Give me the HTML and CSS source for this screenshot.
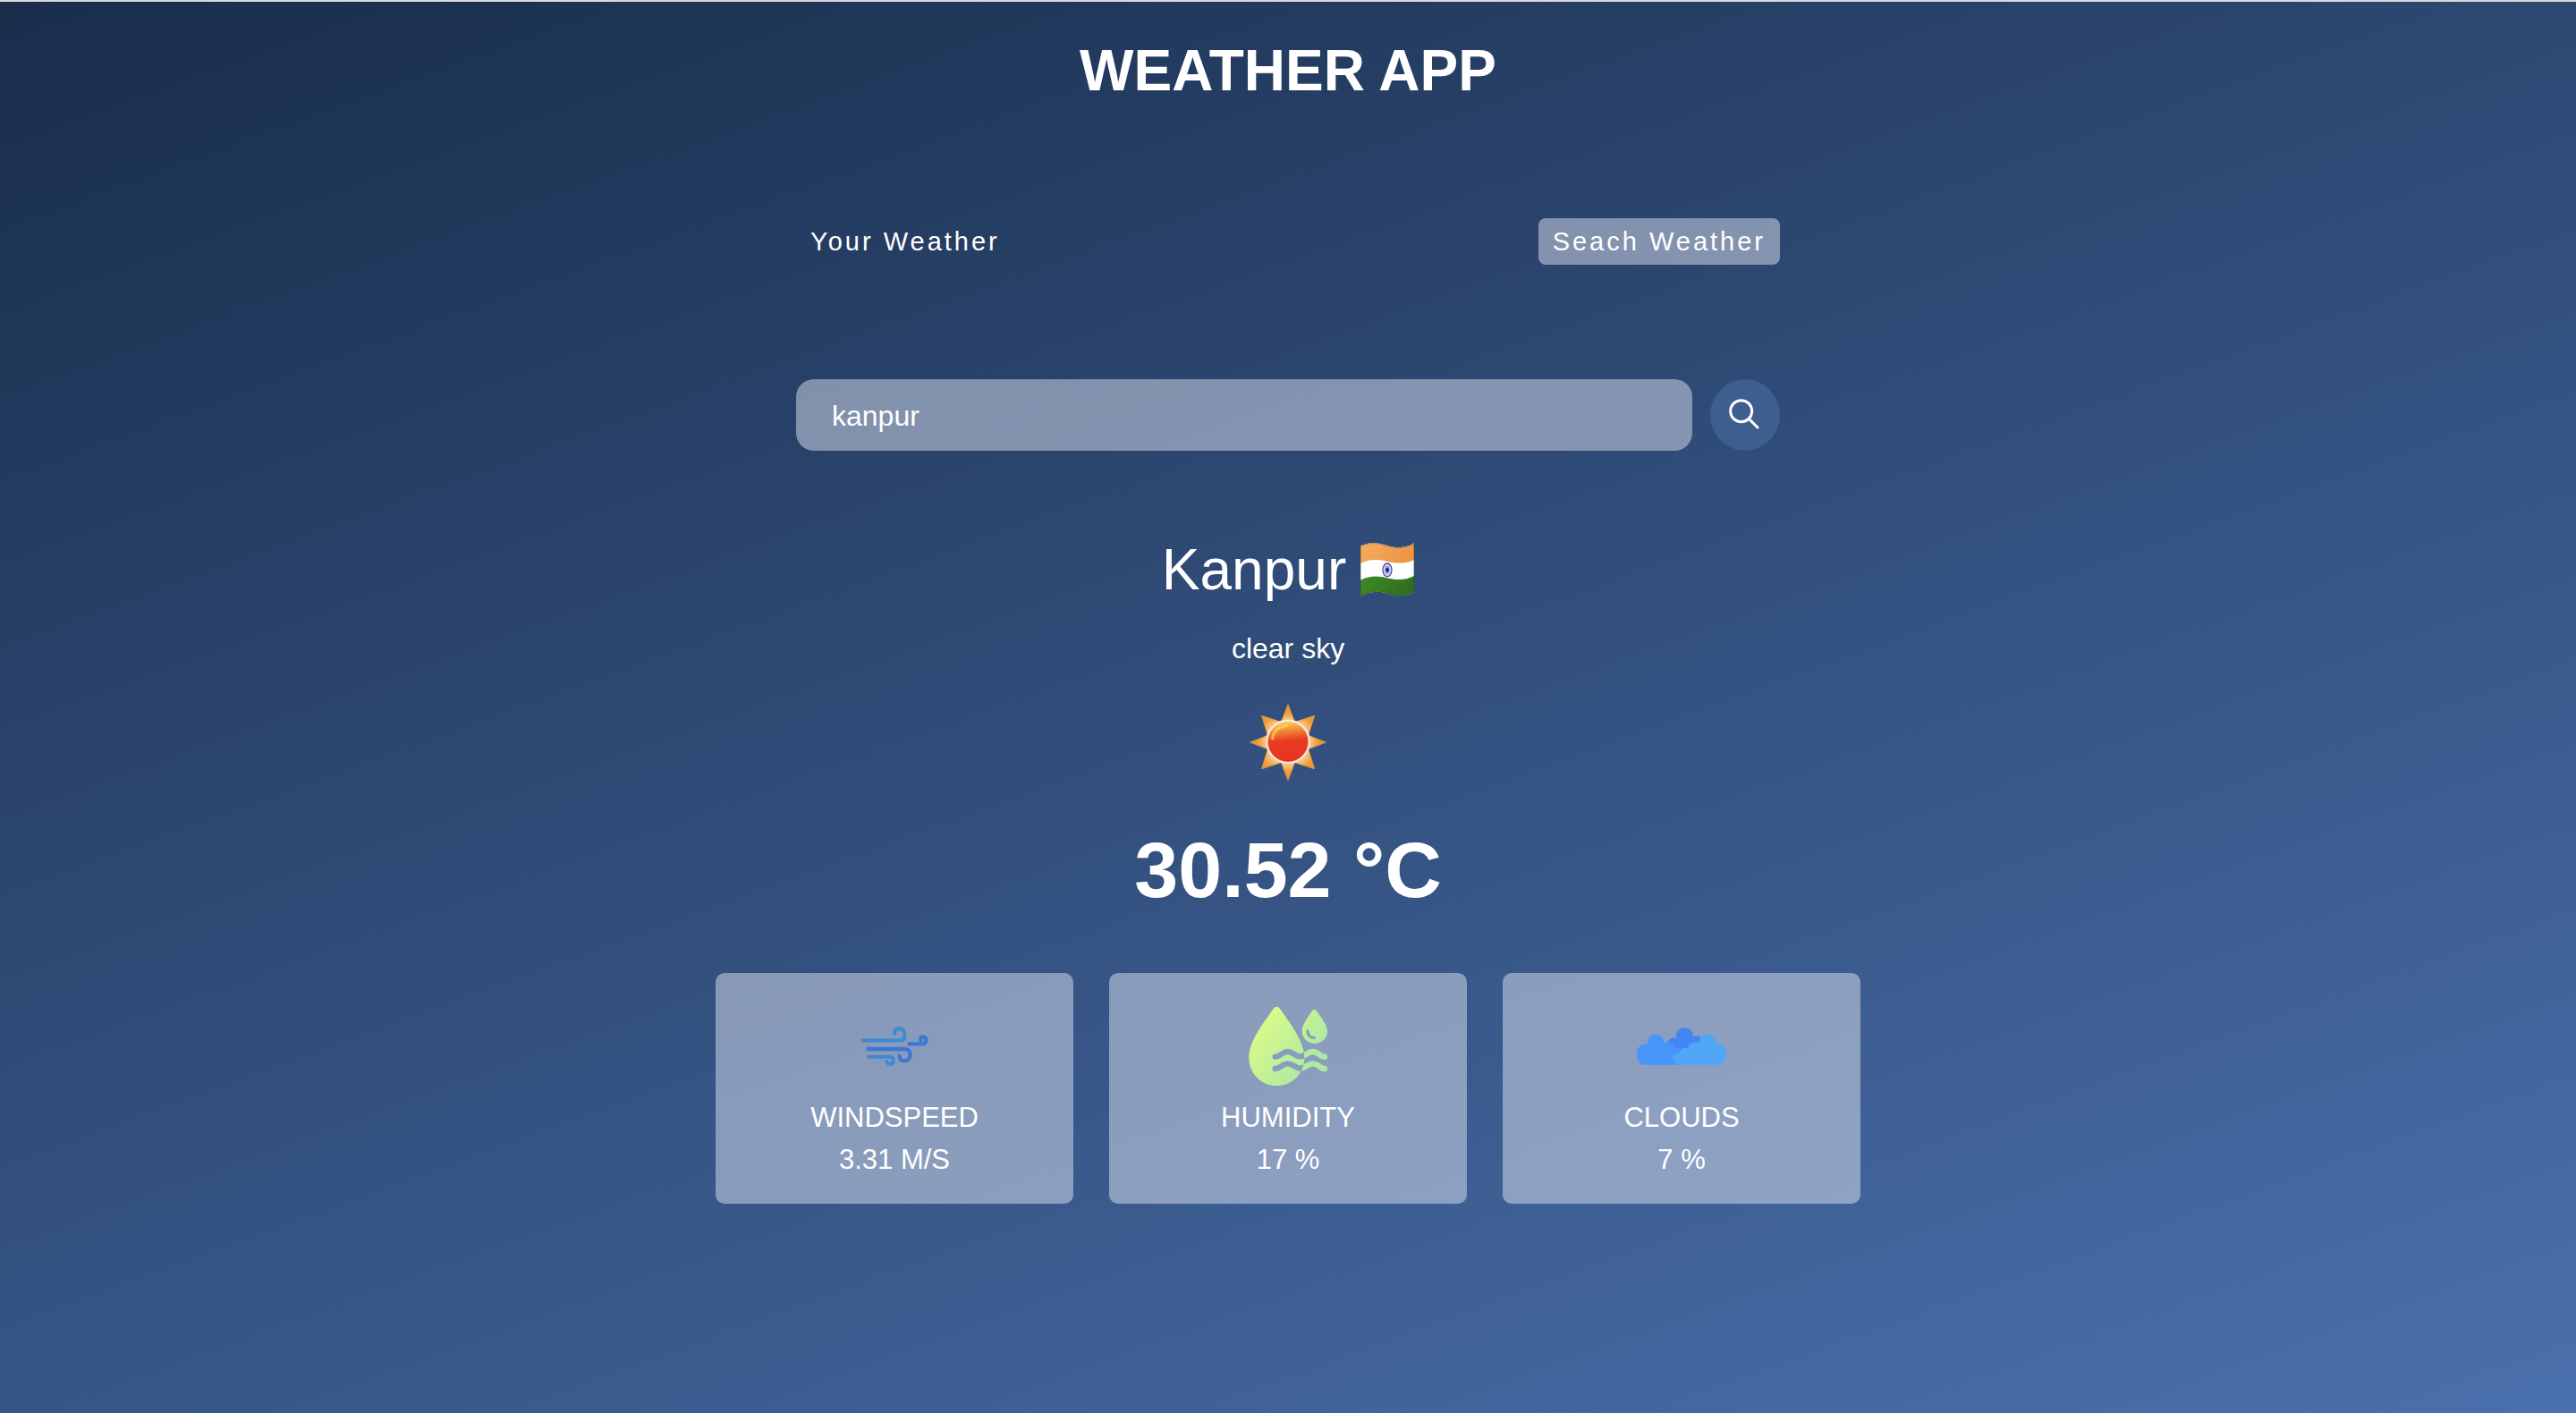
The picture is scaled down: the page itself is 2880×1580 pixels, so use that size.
FILE: index.html
```html
<!DOCTYPE html>
<html lang="en">
<head>
  <meta charset="UTF-8">
  <meta name="viewport" content="width=device-width, initial-scale=1">
  <title>Weather App</title>
  <link rel="stylesheet" href="styles.css">
</head>
<body>
  <main class="wrapper">
    <h1 class="title">WEATHER APP</h1>

    <nav class="tabs">
      <button type="button" class="tab">Your Weather</button>
      <button type="button" class="tab tab-current">Seach Weather</button>
    </nav>

    <form class="search">
      <input class="search-input" type="text" value="kanpur" aria-label="Search for city">
      <button class="search-button" type="submit" aria-label="Search">
        <svg class="search-icon" viewBox="0 0 102 102" fill="none" stroke="#fff" stroke-width="9" stroke-linecap="round">
          <circle cx="41" cy="41" r="36"/>
          <path d="M67 67L96 96"/>
        </svg>
      </button>
    </form>

    <section class="weather">
      <div class="place">
        <h2 class="city">Kanpur</h2>
        <svg class="flag" viewBox="63 50 180 180" role="img" aria-label="India">
          <defs>
            <linearGradient id="saffron" x1="0" y1="0" x2="1" y2="0.4">
              <stop offset="0" stop-color="#f4ae62"/>
              <stop offset="1" stop-color="#ee9647"/>
            </linearGradient>
            <linearGradient id="green" x1="0" y1="0" x2="1" y2="0.4">
              <stop offset="0" stop-color="#418b2a"/>
              <stop offset="1" stop-color="#306e1d"/>
            </linearGradient>
            <clipPath id="flag-shape">
              <path d="M63 61C92 46 124 49 153 59S214 68 243 51V215C214 233 182 230 153 220S92 214 63 229Z"/>
            </clipPath>
          </defs>
          <g clip-path="url(#flag-shape)">
            <path fill="#fff" d="M63 50H243V230H63Z"/>
            <path fill="url(#saffron)" d="M63 45H243V107C214 122 182 119 153 112S92 104 63 119Z"/>
            <path fill="url(#green)" d="M63 175C92 159 124 160 153 168S214 176 243 161V235H63Z"/>
            <path fill="none" stroke="#23401f" stroke-opacity="0.35" stroke-width="5" d="M63 61C92 46 124 49 153 59S214 68 243 51V215C214 233 182 230 153 220S92 214 63 229Z"/>
          </g>
          <ellipse cx="153" cy="141" rx="15" ry="22" fill="#d9d8ee" stroke="#4b49a8" stroke-width="4"/>
          <ellipse cx="153" cy="141" rx="8" ry="13" fill="#8f8dcb"/>
          <ellipse cx="153" cy="141" rx="5" ry="7" fill="#1d1b86"/>
        </svg>
      </div>
      <p class="description">clear sky</p>
      <svg class="sun" viewBox="18 18 324 324" role="img" aria-label="Clear sky">
        <defs>
          <linearGradient id="sun-face" x1="0.42" y1="0" x2="0.52" y2="1">
            <stop offset="0" stop-color="#ffdc62"/>
            <stop offset="0.22" stop-color="#f0913a"/>
            <stop offset="0.48" stop-color="#e93a22"/>
            <stop offset="1" stop-color="#e93422"/>
          </linearGradient>
          <radialGradient id="sun-rays" gradientUnits="userSpaceOnUse" cx="180" cy="180" r="128">
            <stop offset="0.6" stop-color="#f9c27c"/>
            <stop offset="0.78" stop-color="#f19b3c"/>
            <stop offset="1" stop-color="#e0913c"/>
          </radialGradient>
        </defs>
        <path fill="url(#sun-rays)" stroke="#e0953f" stroke-width="3" stroke-linejoin="round" d="M180 53L203 112L269 91L248 157L307 180L248 203L269 269L203 248L180 307L157 248L92 269L112 203L53 180L112 157L92 91L157 112Z"/>
        <circle cx="180" cy="178" r="71" fill="url(#sun-face)" stroke="#f5e9e2" stroke-width="7"/>
        <path d="M128 168Q132 132 176 124" fill="none" stroke="#ffdc50" stroke-width="9" stroke-linecap="round" stroke-opacity="0.7"/>
      </svg>
      <p class="temperature">30.52 °C</p>
    </section>

    <section class="cards">
      <article class="card">
        <svg class="card-icon" viewBox="30 -30 300 300" fill="none" stroke-width="13" stroke-linecap="round" aria-hidden="true">
          <g stroke="#3f8ad2">
            <path d="M73 100H199C209 100 214 93 214 83C214 68 207 60 197 60S180 67 180 77"/>
            <path d="M94 155H166C173 155 176 161 176 168C176 176 171 180 165 180S155 176 155 171" stroke-width="12"/>
          </g>
          <g stroke="#3b77d3">
            <path d="M91 129H216C227 129 233 138 233 147C233 160 225 169 214 169S197 162 197 153"/>
            <path d="M230 112H275C282 112 286 106 286 100C286 92 281 88 275 88S267 93 268 99"/>
          </g>
        </svg>
        <p class="card-text">WINDSPEED</p>
        <p class="card-text">3.31 M/S</p>
      </article>

      <article class="card">
        <svg class="card-icon" viewBox="30 30 300 300" aria-hidden="true">
          <defs>
            <linearGradient id="humid" gradientUnits="userSpaceOnUse" x1="90" y1="130" x2="250" y2="250">
              <stop offset="0" stop-color="#d6f98a"/>
              <stop offset="1" stop-color="#ade9a3"/>
            </linearGradient>
            <path id="big-drop" d="M142 47C148 47 152 52 156 58C188 105 235 163 235 218C235 270 194 312 142 312S49 270 49 218C49 163 96 105 128 58C132 52 136 47 142 47Z"/>
            <g id="waves" fill="none" stroke-width="19" stroke-linecap="round">
              <path d="M137 215C157 215 158 198 179 198S201 214 221 214S244 198 264 198S283 215 303 215"/>
              <path d="M137 255C157 255 158 238 179 238S201 254 221 254S244 238 264 238S283 255 303 255"/>
            </g>
            <mask id="drop-mask" maskUnits="userSpaceOnUse" x="30" y="30" width="300" height="300">
              <path fill="#fff" d="M30 30H330V330H30Z"/>
              <use href="#waves" stroke="#000"/>
            </mask>
            <mask id="wave-mask" maskUnits="userSpaceOnUse" x="30" y="30" width="300" height="300">
              <path fill="#fff" d="M30 30H330V330H30Z"/>
              <use href="#big-drop" fill="#000"/>
            </mask>
          </defs>
          <g mask="url(#drop-mask)"><use href="#big-drop" fill="url(#humid)"/></g>
          <g mask="url(#wave-mask)"><use href="#waves" stroke="url(#humid)"/></g>
          <path fill="url(#humid)" d="M268 57C273 57 276 61 279 65C293 86 312 108 312 130C312 153 293 171 270 171S227 153 227 130C227 108 244 86 258 65C261 61 264 57 268 57Z"/>
          <path d="M246 129C246 142 255 151 268 151" fill="none" stroke="#8c9dbe" stroke-width="10" stroke-linecap="round"/>
        </svg>
        <p class="card-text">HUMIDITY</p>
        <p class="card-text">17 %</p>
      </article>

      <article class="card">
        <svg class="card-icon" viewBox="60 -30 300 300" aria-hidden="true">
          <path fill="#4286f6" d="M160 115C162 98 176 88 193 92C188 72 203 58 220 58S252 72 248 87C260 82 276 84 284 98V150H160Z"/>
          <path fill="#4795f8" d="M80 182C68 178 60 162 60 145C60 124 74 110 96 114C94 93 106 80 123 80S151 91 150 108C166 103 183 110 187 124L205 126V182Z"/>
          <path fill="#51a6f8" d="M202 182C190 182 180 174 180 162S190 143 201 144C202 130 215 122 233 125C232 112 250 102 270 108C269 91 281 80 297 80S326 92 325 112C346 111 360 124 360 145C360 162 352 178 340 182Z"/>
        </svg>
        <p class="card-text">CLOUDS</p>
        <p class="card-text">7 %</p>
      </article>
    </section>
  </main>
</body>
</html>
```
FILE: styles.css
```css
* {
  box-sizing: border-box;
  margin: 0;
  padding: 0;
}

body {
  min-height: 100vh;
  border-top: 2px solid #d9dadc;
  background: linear-gradient(160deg, #192d4b, #4a70ad) border-box;
  color: #fff;
  font-family: "Liberation Sans", Arial, Helvetica, sans-serif;
  font-size: 32px;
}

button,
input {
  border: 0;
  color: inherit;
  font: inherit;
}

button {
  cursor: pointer;
}

.wrapper {
  display: flex;
  flex-direction: column;
  align-items: center;
  padding: 40px 32px;
}

.title {
  font-size: 64px;
  line-height: 74px;
}

.tabs,
.search {
  display: flex;
  width: 100%;
  max-width: 1100px;
  margin-top: 128px;
}

.tabs {
  justify-content: space-between;
}

.tab {
  padding: 8px 16px;
  border-radius: 8px;
  background: transparent;
  font-size: 29px;
  line-height: 36px;
  letter-spacing: 3px;
}

.tab-current {
  background: rgba(219, 226, 239, 0.5);
}

.search {
  gap: 20px;
}

.search-input {
  flex: 1;
  min-width: 0;
  height: 80px;
  padding: 2px 40px 0;
  border-radius: 20px;
  background: rgba(219, 226, 239, 0.5);
}

.search-button {
  display: flex;
  align-items: center;
  justify-content: center;
  width: 78px;
  height: 80px;
  padding: 0 2px 2px 0;
  border-radius: 50%;
  background: #3e5e90;
}

.search-icon {
  width: 34px;
  height: 34px;
}

.weather {
  display: flex;
  flex-direction: column;
  align-items: center;
  gap: 32px;
  margin-top: 96px;
}

.place {
  display: flex;
  align-items: center;
  gap: 16px;
}

.city {
  font-size: 64px;
  font-weight: 400;
  line-height: 74px;
}

.flag {
  width: 60px;
  height: 60px;
}

.description {
  line-height: 38px;
}

.sun {
  width: 108px;
  height: 108px;
}

.temperature {
  font-size: 88px;
  font-weight: 700;
  line-height: 114px;
}

.cards {
  display: grid;
  grid-template-columns: repeat(3, 1fr);
  gap: 40px;
  width: 100%;
  max-width: 1280px;
  margin-top: 58px;
}

.card {
  display: flex;
  flex-direction: column;
  align-items: center;
  padding: 32px 16px 26px;
  border-radius: 10px;
  background: rgba(219, 226, 239, 0.5);
}

.card-icon {
  width: 100px;
  height: 100px;
  margin-bottom: 6px;
}

.card-text {
  font-size: 31px;
  line-height: 47px;
}
```
